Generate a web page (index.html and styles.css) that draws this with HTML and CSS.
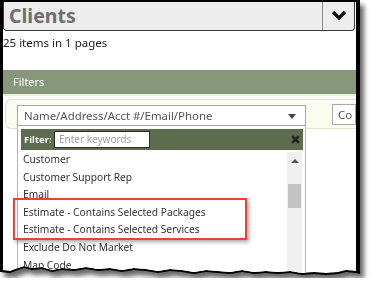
FILE: index.html
```html
<!doctype html>
<html>
<head>
  <meta charset="UTF-8">
  <link rel="stylesheet" href="styles.css">
</head>
<body>
  <div class="paper">
    <div class="sheet">
      <div class="page">
        <div class="title-bar">
          <h1 class="title">Clients</h1>
          <div class="title-toggle">
            <svg width="16" height="10" viewBox="0 0 16 10"><path d="M2 2 L8 8 L14 2" fill="none" stroke="#111" stroke-width="3.4"/></svg>
          </div>
        </div>
        <div class="count">25 items in 1 pages</div>

        <div class="filters-head">Filters</div>
        <div class="filters-body">
          <div class="filter-row">
            <div class="select-wrap">
              <div class="select">Name/Address/Acct #/Email/Phone<span class="caret"></span></div>
              <div class="dropdown">
                <div class="dd-search">
                  <span class="dd-label">Filter:</span>
                  <div class="dd-input">Enter keywords</div>
                  <svg class="dd-close" width="9" height="9" viewBox="0 0 9 9"><path d="M1.2 1.2 L7.8 7.8 M7.8 1.2 L1.2 7.8" stroke="#222" stroke-width="2.6"/></svg>
                </div>
                <div class="dd-body">
                  <ul class="dd-list">
                    <li>Customer</li>
                    <li>Customer Support Rep</li>
                    <li>Email</li>
                    <li>Estimate - Contains Selected Packages</li>
                    <li>Estimate - Contains Selected Services</li>
                    <li>Exclude Do Not Market</li>
                    <li>Map Code</li>
                  </ul>
                  <div class="scrollbar">
                    <span class="scroll-up"></span>
                    <span class="scroll-thumb"></span>
                  </div>
                </div>
              </div>
            </div>
            <div class="select select-second">Co</div>
          </div>
        </div>

        <div class="callout"></div>
      </div>
    </div>
  </div>
</body>
</html>
```

FILE: styles.css
```css
html, body {
  margin: 0;
  padding: 0;
  background: #fff;
  font-family: 'Noto Sans', 'Open Sans', Arial, sans-serif;
  color: #333;
}

.paper {
  width: 360px;
  height: 278px;
  filter: drop-shadow(4px 5px 2.5px rgba(0, 0, 0, 0.6));
}

.sheet {
  box-sizing: border-box;
  width: 360px;
  height: 278px;
  padding: 2px 4px 0 3px;
  background: #000;
  clip-path: polygon(0 0, 360px 0, 360px 274px, 356px 273px, 346px 272px, 338px 274px, 326px 275px, 314px 274px, 302px 275px, 290px 273px, 278px 274px, 266px 273px, 254px 274px, 242px 272px, 230px 274px, 218px 273px, 206px 272px, 194px 274px, 182px 272px, 170px 271px, 158px 273px, 146px 271px, 134px 270px, 122px 272px, 110px 270px, 98px 271px, 86px 269px, 74px 271px, 62px 270px, 52px 272px, 42px 269px, 32px 270px, 24px 268px, 18px 270px, 10px 273px, 0 272px);
}

.page {
  position: relative;
  height: 276px;
  background: #fff;
  overflow: hidden;
  clip-path: polygon(0 0, 353px 0, 353px 269px, 343px 268px, 335px 270px, 323px 271px, 311px 270px, 299px 271px, 287px 269px, 275px 270px, 263px 269px, 251px 270px, 239px 268px, 227px 270px, 215px 269px, 203px 268px, 191px 270px, 179px 268px, 167px 267px, 155px 269px, 143px 267px, 131px 266px, 119px 268px, 107px 266px, 95px 267px, 83px 265px, 71px 267px, 59px 266px, 49px 268px, 39px 265px, 29px 266px, 21px 264px, 15px 266px, 7px 269px, 0 268px);
}

/* header */
.title-bar {
  display: flex;
  width: 352px;
  height: 29px;
  box-sizing: border-box;
  background: #ededed;
  border: 1px solid #3a3a3a;
  border-top: none;
  border-radius: 0 0 4px 4px;
}

.title {
  flex: 1;
  margin: 0;
  padding-left: 5px;
  font-size: 19.5px;
  line-height: 27px;
  font-weight: bold;
  color: #6e6e6e;
}

.title-toggle {
  width: 31px;
  border-left: 1px solid #8a8a8a;
  display: flex;
  align-items: center;
  justify-content: center;
  padding-bottom: 2px;
}

.count {
  margin-top: 4px;
  height: 16px;
  font-size: 11.5px;
  line-height: 16px;
  color: #222;
}

/* filters */
.filters-head {
  margin-top: 19px;
  height: 24px;
  padding-left: 10px;
  background: #879779;
  color: #fff;
  font-size: 11px;
  line-height: 24px;
  border-bottom: 2px solid #e9eedf;
}

.filters-body {
  margin: 3px 0 0 2px;
  padding: 5px 0 2px 11px;
  background: #fafcef;
  border: 1px solid #e0e6cc;
  border-right: none;
  border-radius: 6px 0 0 6px;
}

.filter-row {
  display: flex;
  gap: 26px;
}

.select-wrap {
  position: relative;
}

.select {
  box-sizing: border-box;
  width: 289px;
  height: 21px;
  padding-left: 6px;
  background: #fff;
  border: 1px solid #a8a8a8;
  font-size: 11.4px;
  line-height: 19px;
  color: #555;
  position: relative;
}

.caret {
  position: absolute;
  right: 9px;
  top: 8px;
  border-left: 4px solid transparent;
  border-right: 4px solid transparent;
  border-top: 5px solid #444;
}

.select-second {
  width: 40px;
  padding-left: 5px;
  margin-top: -1px;
}

/* dropdown menu */
.dropdown {
  position: absolute;
  top: 100%;
  left: 0;
  width: 289px;
  height: 160px;
  box-sizing: border-box;
  padding: 3px 2px 0 3px;
  background: #fff;
  border: 1px solid #b4b4b4;
  border-top: none;
  z-index: 2;
}

.dd-search {
  display: flex;
  align-items: center;
  height: 21px;
  padding: 0 3px;
  background: #5c6c4e;
}

.dd-label {
  width: 30px;
  color: #fff;
  font-size: 9.5px;
  font-weight: bold;
}

.dd-input {
  box-sizing: border-box;
  width: 96px;
  height: 17px;
  padding-left: 4px;
  background: #fff;
  border: 1px solid #2b2b2b;
  font-size: 10px;
  line-height: 15px;
  color: #a0a0a0;
}

.dd-close {
  margin-left: auto;
}

.dd-body {
  display: flex;
}

.dd-list {
  flex: 1;
  list-style: none;
  margin: 0;
  padding: 1px 0 0 2px;
}

.dd-list li {
  height: 17.6px;
  font-size: 10.2px;
  line-height: 17.6px;
  color: #333;
  white-space: nowrap;
}

.scrollbar {
  width: 15px;
  margin: 2px 1px 0 0;
  background: #f0f0f0;
  display: flex;
  flex-direction: column;
  align-items: center;
}

.scroll-up {
  margin-top: 7px;
  border-left: 4px solid transparent;
  border-right: 4px solid transparent;
  border-bottom: 4px solid #555;
}

.scroll-thumb {
  margin-top: 21px;
  width: 13px;
  height: 24px;
  background: #c3c3c3;
}

/* annotation */
.callout {
  position: absolute;
  left: 10px;
  top: 196px;
  width: 234px;
  height: 42px;
  box-sizing: border-box;
  border: 2px solid #e4433f;
  box-shadow: 2px 2px 4px rgba(0, 0, 0, 0.35);
  z-index: 3;
}
```
